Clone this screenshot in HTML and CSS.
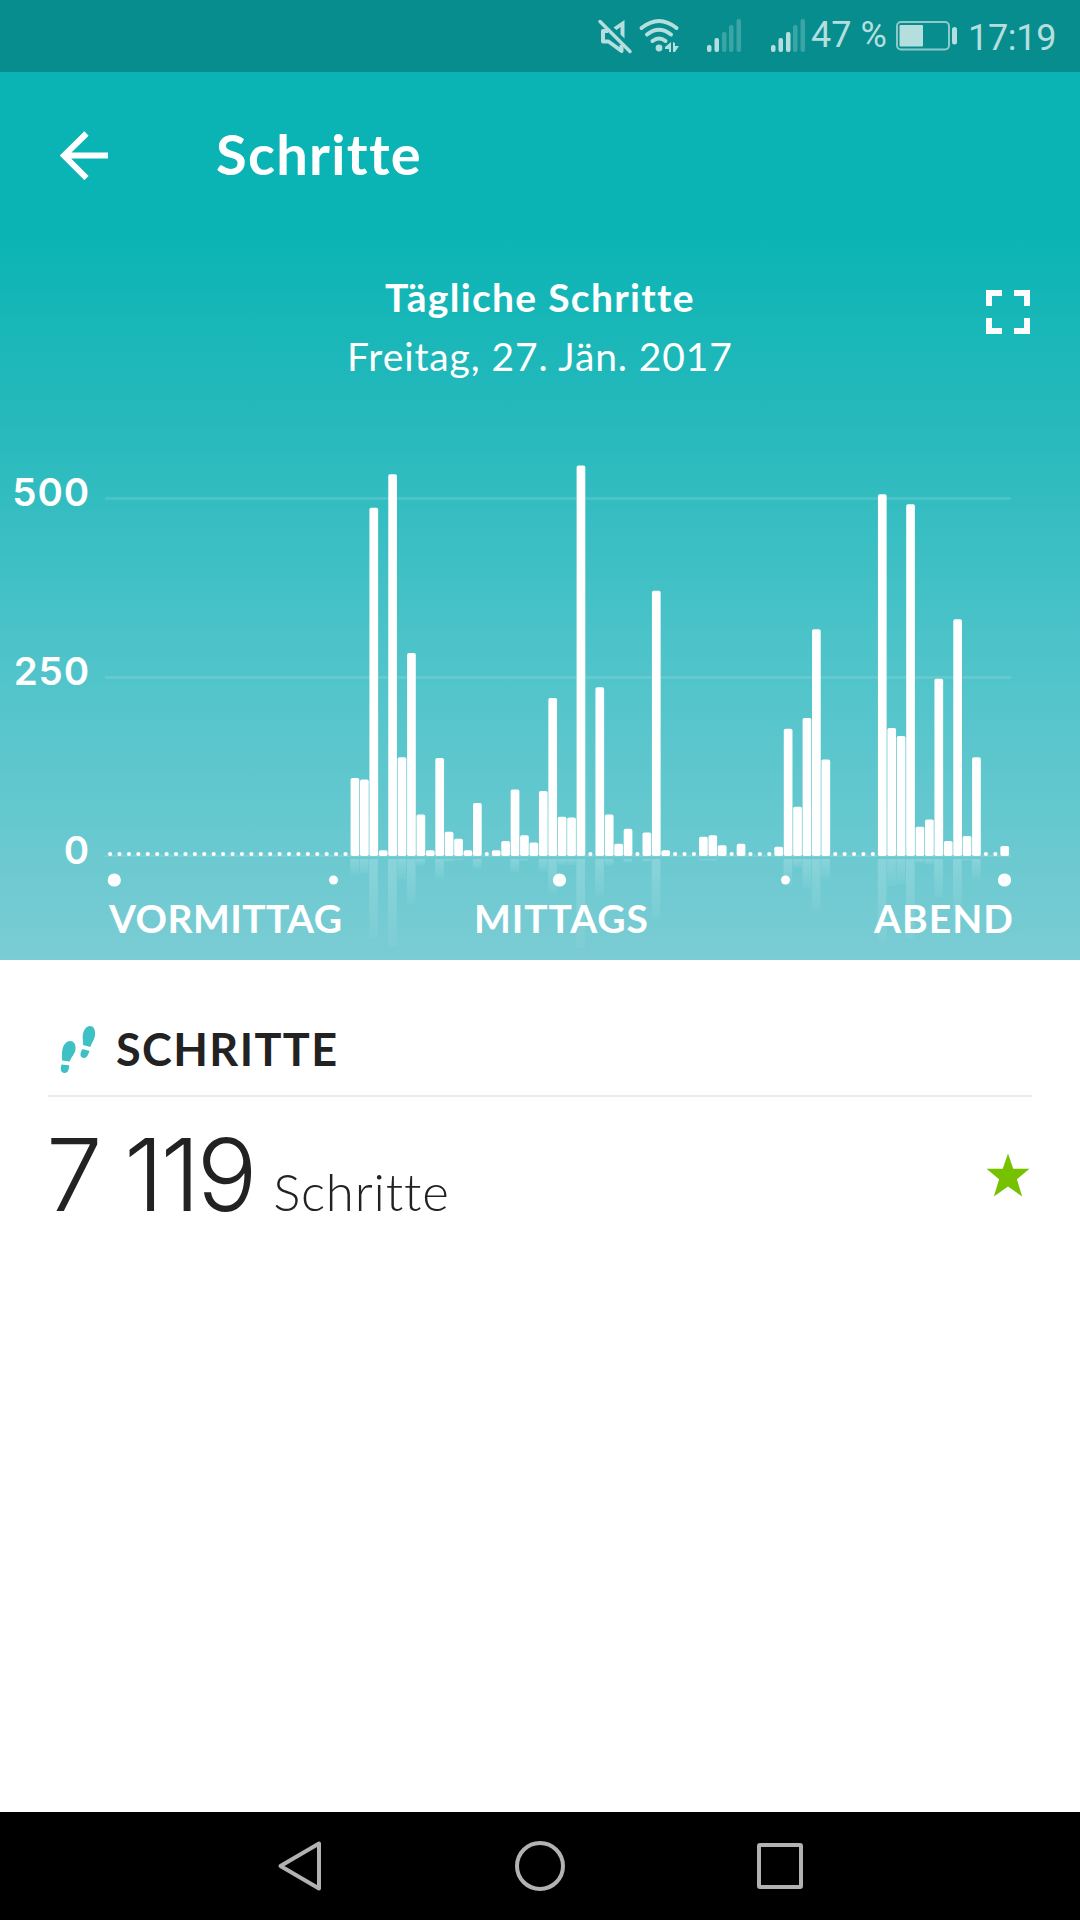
FILE: index.html
```html
<!DOCTYPE html>
<html lang="de">
<head>
  <meta charset="UTF-8">
  <meta name="viewport" content="width=device-width, initial-scale=1.0">
  <title>Schritte</title>
  <link rel="stylesheet" href="styles.css">
</head>
<body>
  <div class="status-bar">
    <svg class="status-icons" viewBox="590 0 220 72">
      <g fill="none" stroke="#b5dfde" stroke-width="4" stroke-linejoin="round">
        <path d="M608 31h-5v10.500h5.500l13 9.500v-6"/>
        <path d="M613.500 27.500l11-7.500v18.500l-4-4v-7.500l-4 3z" fill="#b5dfde" stroke="none"/>
        <path d="M600 21.500l30 30" stroke-linecap="round" stroke-width="3.500"/>
        <g stroke-linecap="round">
          <path d="M641.500 28q17.500-14 35 0"/>
          <path d="M647 34.500q12-9.500 24 0"/>
          <path d="M652.500 41q6.500-5 13 0"/>
        </g>
      </g>
      <g fill="#b5dfde">
        <circle cx="659" cy="48" r="3.400"/>
        <path d="M671 42v10h-2v-3h-4v-2zM673 42l2 1v3h4l-4 6h-2z"/>
        <rect x="707" y="45" width="4.500" height="7" rx="2"/>
        <rect x="714.500" y="38" width="4.500" height="14" rx="2"/>
        <rect x="771" y="45" width="4.500" height="7" rx="2"/>
        <rect x="778.500" y="38" width="4.500" height="14" rx="2"/>
        <rect x="786" y="32" width="4.500" height="20" rx="2"/>
      </g>
      <g fill="#3ba5a5">
        <rect x="722" y="32" width="4.500" height="20" rx="2"/>
        <rect x="729" y="25" width="4.500" height="27" rx="2"/>
        <rect x="736.500" y="19" width="4.500" height="33" rx="2"/>
        <rect x="793" y="25" width="4.500" height="27" rx="2"/>
        <rect x="800.500" y="19" width="4.500" height="33" rx="2"/>
      </g>
    </svg>
    <span class="percent">47 %</span>
    <svg class="battery" viewBox="0 0 62 30">
      <rect x="1" y="1" width="52" height="27.500" rx="4" fill="none" stroke="#8ccac9" stroke-width="2"/>
      <rect x="3.500" y="4" width="23.500" height="21.500" rx="1" fill="#b5dfde"/>
      <rect x="56" y="6" width="5" height="17.500" rx="2.500" fill="#b5dfde"/>
    </svg>
    <span class="time">17:19</span>
  </div>

  <div class="hero">
    <div class="toolbar">
      <svg class="back" viewBox="0 0 48 49">
        <path d="M26.500 2.500L4 24.500l22.500 22.500M5 24.500h43" fill="none" stroke="#fff" stroke-width="6"/>
      </svg>
      <h1>Schritte</h1>
    </div>
    <div class="chart-title">
      <div class="chart-name">Tägliche Schritte</div>
      <div class="chart-date">Freitag, 27. Jän. 2017</div>
      <svg class="fullscreen" viewBox="0 0 44 44">
        <path d="M3 16V3h13M28 3h13v13M41 28v13H28M16 41H3V28" fill="none" stroke="#fff" stroke-width="6"/>
      </svg>
    </div>
    <svg class="chart" viewBox="0 400 1080 560">
      <defs>
        <linearGradient id="fade" x1="0" y1="0" x2="0" y2="1">
          <stop offset="0" stop-color="#fff" stop-opacity=".2"/>
          <stop offset="1" stop-color="#fff" stop-opacity=".04"/>
        </linearGradient>
      </defs>
      <g fill="#fff" fill-opacity=".11">
        <rect x="105" y="497" width="906" height="3"/>
        <rect x="105" y="676" width="906" height="3"/>
        <rect x="105" y="855" width="906" height="2"/>
      </g>
      <g id="bars" fill="#fff"></g>
      <g fill="#fff">
        <circle cx="114.300" cy="880" r="6.600"/>
        <circle cx="333.500" cy="880" r="4.500"/>
        <circle cx="559.500" cy="880" r="6.600"/>
        <circle cx="785.500" cy="880" r="4.500"/>
        <circle cx="1004.500" cy="880" r="6.600"/>
      </g>
      <g class="axis-y">
        <text x="90" y="505.500">500</text>
        <text x="90" y="684.500">250</text>
        <text x="90" y="863.500">0</text>
      </g>
      <g class="axis-x">
        <text x="109" y="932.500" textLength="233">VORMITTAG</text>
        <text x="474" y="932.500" textLength="174">MITTAGS</text>
        <text x="874" y="932.500" textLength="139">ABEND</text>
      </g>
    </svg>
  </div>

  <div class="summary">
    <div class="summary-head">
      <svg class="feet" viewBox="60 1025 36 49" fill="#3ec1c4">
        <path d="M90 1026c4 0 5.500 4 5 9-.400 5-3.500 7.500-4.500 12l-7.500-2c.500-4-.800-6-.200-10 .700-5 3.500-9 7.200-9z"/>
        <path d="M82.500 1049l7 2c-1.500 4-2.500 7-5.500 7-3.800 0-4.800-4-1.500-9z"/>
        <path d="M70.500 1041c4 .200 5.500 4.500 5 8.500-.600 5-4.500 7.500-5.800 12l-7.700-1c.500-4-.500-6.500.300-10.500 1-5 4-9.200 8.200-9z"/>
        <path d="M61.500 1064.500l7.700.800c-.300 4.500-1.200 8-4.700 7.700-3.700-.200-4.500-4-3-8.500z"/>
      </svg>
      <h2>SCHRITTE</h2>
    </div>
    <div class="summary-row">
      <div class="total"><span class="count">7 119</span><span class="unit">Schritte</span></div>
      <svg class="star" viewBox="0 0 42 42">
        <path d="M21 0.500l5 14.500h15.500l-12 10 5 16.500L21 32 7.500 41.500l5-16.500-12-10H16z" fill="#76c100"/>
      </svg>
    </div>
  </div>

  <div class="nav-bar">
    <svg viewBox="0 0 52 52"><path d="M45 3.500v45L6.500 26z"/></svg>
    <svg viewBox="0 0 52 52"><circle cx="26" cy="26" r="23"/></svg>
    <svg viewBox="0 0 52 52"><rect x="5" y="5" width="42" height="42" rx="1"/></svg>
  </div>

  <script>
    // steps per 15 minutes, midnight to midnight
    const steps = [
      0, 0, 0, 0, 0, 0, 0, 0, 0, 0, 0, 0, 0, 0, 0, 0, 0, 0, 0, 0, 0, 0, 0, 0,
      0, 0, 109, 107, 487, 8, 534, 138, 284, 58, 8, 137, 34, 24, 8, 74, 0, 8, 21, 93, 29, 19, 91, 221,
      55, 54, 546, 0, 236, 58, 17, 38, 0, 33, 371, 8, 0, 0, 0, 27, 29, 15, 0, 17, 0, 0, 0, 13,
      178, 69, 193, 317, 135, 0, 0, 0, 0, 0, 506, 179, 168, 492, 41, 51, 248, 21, 331, 28, 138, 0, 0, 14
    ];
    const base = 856;
    let out = "";

    steps.forEach((n, i) => {
      const x = 110.1 + i * 9.417;
      if (n === 0) {
        out += `<circle cx="${x}" cy="854" r="2.1"/>`;
        return;
      }
      const h = n * 0.715;
      out += `<rect x="${x - 4.35}" y="${base - h}" width="8.7" height="${h}" rx="1.8"/>`;
      const mirror = h * 0.235 - 3;
      if (mirror > 0) {
        out += `<rect x="${x - 4.6}" y="${base + 3}" width="8.7" height="${mirror}" fill="url(#fade)"/>`;
      }
    });
    document.getElementById("bars").innerHTML = out;
  </script>
</body>
</html>
```
FILE: styles.css
```css
* {
  box-sizing: border-box;
}
body {
  margin: 0;
  width: 1080px;
  height: 1920px;
  display: flex;
  flex-direction: column;
  background: #fff;
  color: #222;
  font-family: Lato, "Open Sans", sans-serif;
  font-variant-ligatures: none;
  overflow: hidden;
}
svg {
  display: block;
  flex: none;
}
h1, h2 {
  margin: 0;
}
.status-bar {
  height: 72px;
  padding-left: 590px;
  display: flex;
  background: #088d8e;
  color: #b5dfde;
  font-family: Roboto, sans-serif;
  font-size: 36px;
  line-height: 42px;
  white-space: nowrap;
}
.status-icons {
  width: 220px;
  height: 72px;
}
.percent {
  width: 86px;
  padding: 14px 0 0 1px;
}
.battery {
  width: 62px;
  height: 30px;
  margin-top: 21px;
}
.time {
  padding: 17px 0 0 10px;
  letter-spacing: -0.3px;
}
.hero {
  height: 888px;
  background: linear-gradient(#0bb4b4 163px, #29babd 368px, #4bc3c9 568px, #65c8cf 743px, #7bccd4);
  color: #fff;
}
.toolbar {
  height: 168px;
  padding: 0 0 1px 60px;
  display: flex;
  align-items: center;
}
.back {
  width: 48px;
  height: 49px;
}
.toolbar h1 {
  margin: -3px 0 0 108px;
  font-size: 56px;
  font-weight: 700;
  line-height: 64px;
  letter-spacing: 1.3px;
}
.chart-title {
  position: relative;
  height: 160px;
  padding-top: 28px;
  text-align: center;
  font-size: 39px;
  line-height: 59px;
}
.chart-name {
  font-weight: 700;
  letter-spacing: 1.3px;
}
.chart-date {
  letter-spacing: 0.9px;
}
.fullscreen {
  position: absolute;
  top: 50px;
  right: 50px;
  width: 44px;
  height: 44px;
}
.chart {
  width: 1080px;
  height: 560px;
}
.axis-y {
  fill: #fff;
  font-family: Inter, sans-serif;
  font-size: 38.5px;
  font-weight: 600;
  letter-spacing: 0.9px;
  text-anchor: end;
}
.axis-x {
  fill: #fff;
  font-size: 39px;
  font-weight: 700;
}
.summary {
  flex: 1;
  padding: 0 48px;
}
.summary-head {
  height: 137px;
  padding: 42px 0 0 12px;
  display: flex;
  align-items: center;
  border-bottom: 2px solid #ebebeb;
}
.feet {
  width: 36px;
  height: 49px;
  margin-top: 2px;
}
.summary h2 {
  margin-left: 20px;
  font-size: 45px;
  font-weight: 700;
  line-height: 52px;
  letter-spacing: 1.4px;
}
.summary-row {
  height: 158px;
  padding-right: 2px;
  display: flex;
  justify-content: space-between;
  align-items: center;
  font-weight: 300;
}
.total {
  display: flex;
  align-items: baseline;
  margin: -4px 0 0 -2px;
}
.count {
  font-family: Inter, sans-serif;
  font-size: 101px;
  letter-spacing: -3.4px;
}
.unit {
  margin-left: 19px;
  font-size: 51px;
  letter-spacing: 0.8px;
}
.star {
  width: 44px;
  height: 44px;
  margin-top: -2px;
}
.nav-bar {
  height: 108px;
  padding: 0 274px;
  display: flex;
  justify-content: space-between;
  align-items: center;
  background: #000;
}
.nav-bar svg {
  width: 52px;
  height: 52px;
  fill: none;
  stroke: #b2b2b2;
  stroke-width: 4;
  stroke-linejoin: round;
}
```
